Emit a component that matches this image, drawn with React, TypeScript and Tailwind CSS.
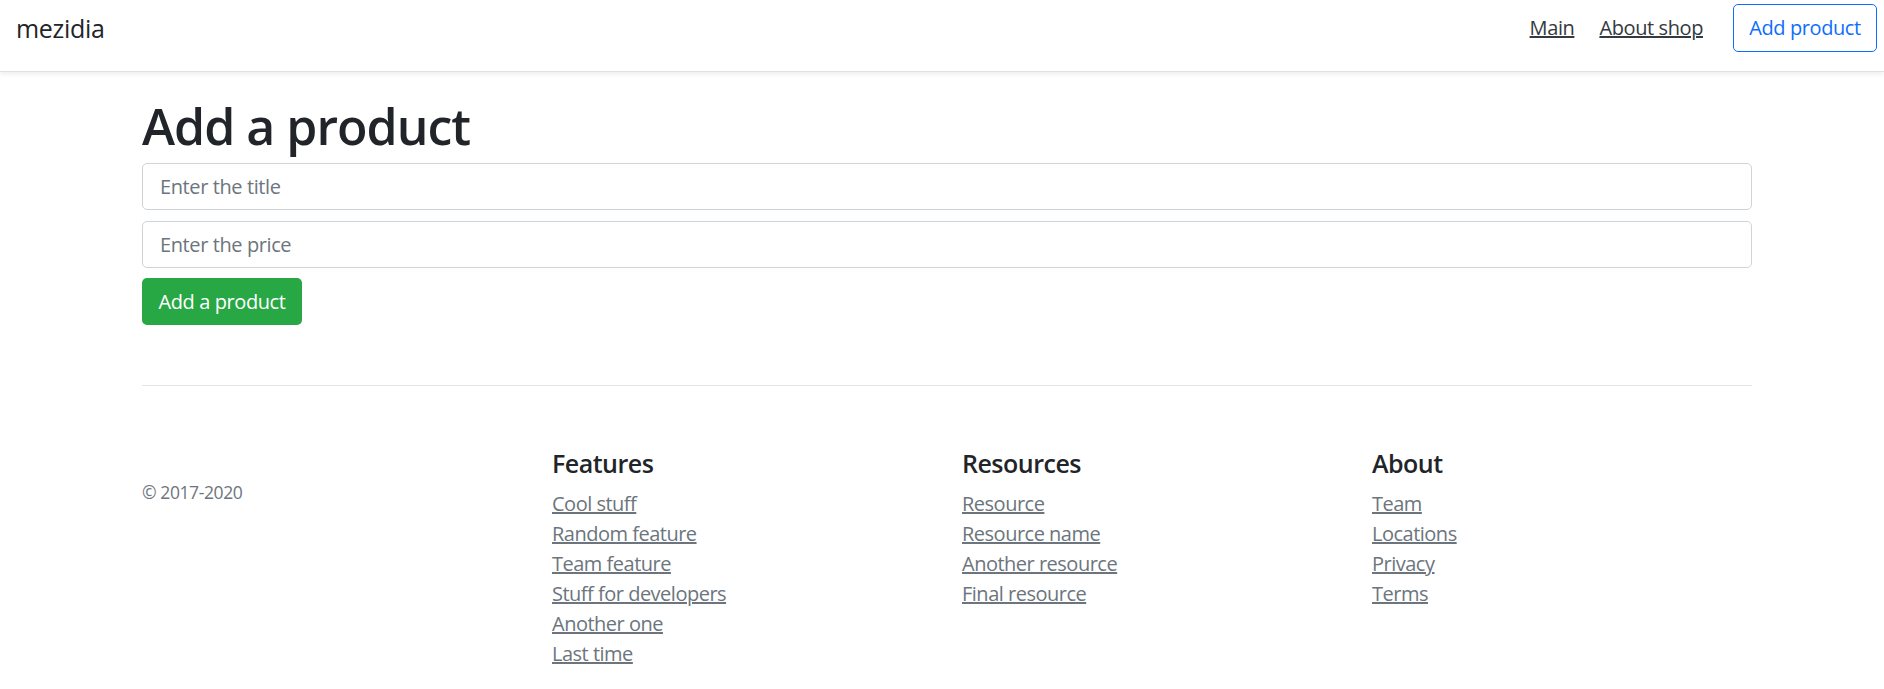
import React from 'react';

const FOOTER_COLUMNS: { title: string; links: string[] }[] = [
  {
    title: 'Features',
    links: ['Cool stuff', 'Random feature', 'Team feature', 'Stuff for developers', 'Another one', 'Last time'],
  },
  {
    title: 'Resources',
    links: ['Resource', 'Resource name', 'Another resource', 'Final resource'],
  },
  {
    title: 'About',
    links: ['Team', 'Locations', 'Privacy', 'Terms'],
  },
];

export default function App() {
  return (
    <div className="min-h-screen bg-white text-[#212529] font-['Segoe_UI','Open_Sans','Noto_Sans',sans-serif] text-[20px] leading-[30px]">
      {/* Navbar */}
      <header className="h-[72px] border-b border-[#dee2e6] shadow-[0_2px_5px_rgba(0,0,0,0.075)]">
        <div className="flex items-center h-[56px] pl-[16px] pr-[7px]">
          <div className="text-[25px] leading-[30px] tracking-[-0.3px]">mezidia</div>
          <nav className="ml-auto flex items-center">
            <a href="#" className="text-[#343a40] underline mr-[25px] tracking-[-0.4px]">Main</a>
            <a href="#" className="text-[#343a40] underline mr-[30px] tracking-[-0.4px]">About shop</a>
            <button className="w-[144px] h-[48px] border border-[#0d6efd] text-[#0d6efd] rounded-[5px] tracking-[-0.4px]">
              Add product
            </button>
          </nav>
        </div>
      </header>

      <main className="pl-[142px] pr-[132px]">
        <h1 className="mt-[24px] mb-[7px] text-[50px] leading-[60px] font-semibold tracking-[-1px]">Add a product</h1>
        <input
          className="block w-full h-[47px] px-[17px] border border-[#ced4da] rounded-[5px] placeholder:text-[#6c757d] tracking-[-0.4px] mb-[11px] outline-none"
          placeholder="Enter the title"
        />
        <input
          className="block w-full h-[47px] px-[17px] border border-[#ced4da] rounded-[5px] placeholder:text-[#6c757d] tracking-[-0.4px] mb-[10px] outline-none"
          placeholder="Enter the price"
        />
        <button className="w-[160px] h-[47px] bg-[#28a745] text-white rounded-[5px] tracking-[-0.4px]">Add a product</button>

        {/* Footer */}
        <footer className="mt-[60px] pt-[62px] pb-[60px] border-t border-[#e5e5e5]">
          <div className="grid grid-cols-4 -mx-[15px]">
            <div className="px-[15px]">
              <small className="block mt-[31px] text-[17.5px] leading-[26px] text-[#6c757d] tracking-[-0.4px]">© 2017-2020</small>
            </div>
            {FOOTER_COLUMNS.map(col => (
              <div key={col.title} className="px-[15px]">
                <h5 className="text-[25px] leading-[30px] font-semibold mb-[11px] tracking-[-0.5px]">{col.title}</h5>
                <ul>
                  {col.links.map(link => (
                    <li key={link}>
                      <a href="#" className="text-[#6c757d] underline tracking-[-0.5px]">{link}</a>
                    </li>
                  ))}
                </ul>
              </div>
            ))}
          </div>
        </footer>
      </main>
    </div>
  );
}
